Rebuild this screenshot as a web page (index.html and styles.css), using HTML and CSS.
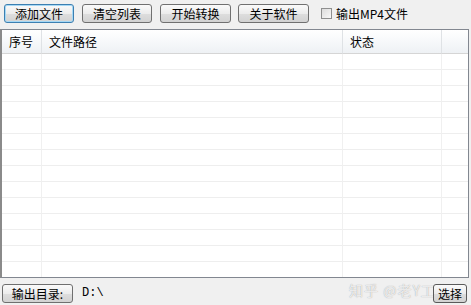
FILE: index.html
```
<!DOCTYPE html>
<html lang="zh-CN">
<head>
    <meta charset="UTF-8">
    <title>MP4转换</title>
    <link rel="stylesheet" href="styles.css">
</head>
<body>
    <div class="window">
        <div class="toolbar">
            <button class="btn focus">添加文件</button>
            <button class="btn">清空列表</button>
            <button class="btn btn-wide">开始转换</button>
            <button class="btn btn-wide">关于软件</button>
            <label class="check"><span class="box"></span>输出MP4文件</label>
        </div>

        <div class="list">
            <div class="row head">
                <div class="cell c1">序号</div>
                <div class="cell c2">文件路径</div>
                <div class="cell c3">状态</div>
                <div class="cell c4"></div>
            </div>
            <div class="row"><div class="cell c1"></div><div class="cell c2"></div><div class="cell c3"></div><div class="cell c4"></div></div>
            <div class="row"><div class="cell c1"></div><div class="cell c2"></div><div class="cell c3"></div><div class="cell c4"></div></div>
            <div class="row"><div class="cell c1"></div><div class="cell c2"></div><div class="cell c3"></div><div class="cell c4"></div></div>
            <div class="row"><div class="cell c1"></div><div class="cell c2"></div><div class="cell c3"></div><div class="cell c4"></div></div>
            <div class="row"><div class="cell c1"></div><div class="cell c2"></div><div class="cell c3"></div><div class="cell c4"></div></div>
            <div class="row"><div class="cell c1"></div><div class="cell c2"></div><div class="cell c3"></div><div class="cell c4"></div></div>
            <div class="row"><div class="cell c1"></div><div class="cell c2"></div><div class="cell c3"></div><div class="cell c4"></div></div>
            <div class="row"><div class="cell c1"></div><div class="cell c2"></div><div class="cell c3"></div><div class="cell c4"></div></div>
            <div class="row"><div class="cell c1"></div><div class="cell c2"></div><div class="cell c3"></div><div class="cell c4"></div></div>
            <div class="row"><div class="cell c1"></div><div class="cell c2"></div><div class="cell c3"></div><div class="cell c4"></div></div>
            <div class="row"><div class="cell c1"></div><div class="cell c2"></div><div class="cell c3"></div><div class="cell c4"></div></div>
            <div class="row"><div class="cell c1"></div><div class="cell c2"></div><div class="cell c3"></div><div class="cell c4"></div></div>
            <div class="row"><div class="cell c1"></div><div class="cell c2"></div><div class="cell c3"></div><div class="cell c4"></div></div>
            <div class="row"><div class="cell c1"></div><div class="cell c2"></div><div class="cell c3"></div><div class="cell c4"></div></div>
        </div>

        <div class="bottom">
            <button class="btn btn-dir">输出目录:</button>
            <div class="path">D:\</div>
            <button class="btn btn-pick">选择</button>
            <!-- 水印 -->
            <span class="mark">知乎 @老Y工作室</span>
        </div>
    </div>
</body>
</html>
```

FILE: styles.css
```
body {
    margin: 0;
    background: #f0f0f0;
    font-family: "Noto Sans CJK SC", "DejaVu Sans", sans-serif;
    font-size: 12px;
    color: #000;
}
.window {
    width: 471px;
    height: 305px;
    position: relative;
    overflow: hidden;
}
.toolbar {
    display: flex;
    align-items: center;
    padding: 4px 0 0 4px;
    height: 19px;
}
.btn {
    width: 70px;
    height: 19px;
    margin-right: 8px;
    padding: 0;
    font-family: inherit;
    font-size: 12px;
    line-height: 17px;
    color: #000;
    border: 1px solid #707070;
    border-radius: 3px;
    background: linear-gradient(#fafafa, #ececec 50%, #dedede 51%, #d2d2d2);
    box-sizing: border-box;
}
.btn.focus {
    border-color: #3c7fb1;
    box-shadow: inset 0 0 0 1px #a6d8f5;
}
.btn-wide {
    width: 71px;
    margin-right: 7px;
}
.check {
    display: flex;
    align-items: center;
    margin-left: 5px;
    height: 19px;
}
.box {
    width: 11px;
    height: 11px;
    margin-right: 4px;
    border: 1px solid #8e8f8f;
    background: linear-gradient(135deg, #dcdcdc, #f8f8f8);
    box-sizing: border-box;
}
.list {
    margin-top: 6px;
    width: 469px;
    height: 249px;
    border: 1px solid #828790;
    border-left: 2px solid #8a8a8a;
    background: #fff;
    box-sizing: border-box;
    overflow: hidden;
}
.row {
    display: flex;
    height: 16px;
}
.row .cell {
    border-bottom: 1px solid #eeeeee;
    border-right: 1px solid #f0f0f0;
    box-sizing: border-box;
}
.row.head {
    height: 24px;
}
.row.head .cell {
    padding-left: 7px;
    line-height: 24px;
    background: linear-gradient(#ffffff, #f5f7f9 60%, #eef1f4);
    border-bottom: 1px solid #d5d5d5;
    border-right: 1px solid #dfe2e5;
}
.c1 {
    width: 40px;
    flex: none;
}
.c2 {
    width: 301px;
    flex: none;
}
.c3 {
    width: 99px;
    flex: none;
}
.c4 {
    flex: 1;
}
.row .cell.c4 {
    border-right: none;
}
.bottom {
    display: flex;
    align-items: center;
    padding: 6px 0 0 2px;
}
.btn-dir {
    width: 71px;
    margin-right: 4px;
    border-color: #6f6f6f;
    text-align: center;
}
.path {
    flex: 1;
    height: 19px;
    line-height: 19px;
    padding-left: 5px;
    font-family: "Liberation Mono", monospace;
    font-size: 12px;
    background: #f0f0f0;
}
.btn-pick {
    width: 34px;
    margin-right: 4px;
    margin-left: 4px;
    border-color: #5a5a5a;
    position: relative;
    z-index: 2;
}
.mark {
    position: absolute;
    left: 349px;
    top: 280px;
    z-index: 1;
    font-size: 14px;
    line-height: 20px;
    color: rgba(255, 255, 255, 0.8);
    text-shadow: 0 0 1px rgba(110, 110, 110, 0.7);
    letter-spacing: 1px;
}
```
